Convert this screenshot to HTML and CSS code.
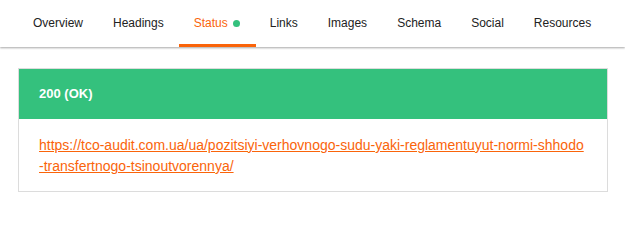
FILE: index.html
```html
<!DOCTYPE html>
<html>
  <head>
    <meta charset="UTF-8">
    <title>Status</title>
    <link rel="stylesheet" href="styles.css">
  </head>
  <body>
    <nav class="tabs">
      <a class="tab" href="#">Overview</a>
      <a class="tab" href="#">Headings</a>
      <a class="tab active" href="#">Status <span class="dot"></span></a>
      <a class="tab" href="#">Links</a>
      <a class="tab" href="#">Images</a>
      <a class="tab" href="#">Schema</a>
      <a class="tab" href="#">Social</a>
      <a class="tab" href="#">Resources</a>
    </nav>

    <div class="content">
      <div class="card">
        <div class="card-head">200 (OK)</div>
        <div class="card-body">
          <a class="url" href="#">https://tco-audit.com.ua/ua/pozitsiyi-verhovnogo-sudu-yaki-reglamentuyut-normi-shhodo -transfertnogo-tsinoutvorennya/</a>
        </div>
      </div>
    </div>
  </body>
</html>
```

FILE: styles.css
```css
:root {
  --orange: #fa640a;
  --green: #34c17d;
  --border-color: #dcdcdc;
}

body {
  margin: 0;
  font-family: "Liberation Sans", Arial, sans-serif;
  font-size: 13px;
  color: #222;
  background-color: #fff;
}

.tabs {
  display: flex;
  height: 47px;
  padding-left: 18px;
  background-color: #fff;
  box-shadow: 0 1px 2px rgba(0, 0, 0, 0.35);
  font-size: 12px;
}

.tab {
  display: flex;
  align-items: center;
  gap: 5px;
  padding: 2px 15px 0;
  color: #222;
  text-decoration: none;
  border-bottom: 3px solid transparent;
  box-sizing: border-box;
}

.tab.active {
  color: var(--orange);
  border-bottom-color: var(--orange);
  padding-right: 16px;
  margin-right: -1px;
}

.dot {
  width: 7px;
  height: 7px;
  border-radius: 50%;
  background-color: var(--green);
}

.content {
  padding: 21px 17px 0 18px;
}

.card {
  border: 1px solid var(--border-color);
}

.card-head {
  background-color: var(--green);
  color: #fff;
  font-weight: bold;
  height: 50px;
  line-height: 50px;
  padding: 0 20px;
}

.card-body {
  padding: 16px 20px 14px;
  line-height: 21px;
}

.url {
  color: var(--orange);
  font-size: 14px;
}
```
